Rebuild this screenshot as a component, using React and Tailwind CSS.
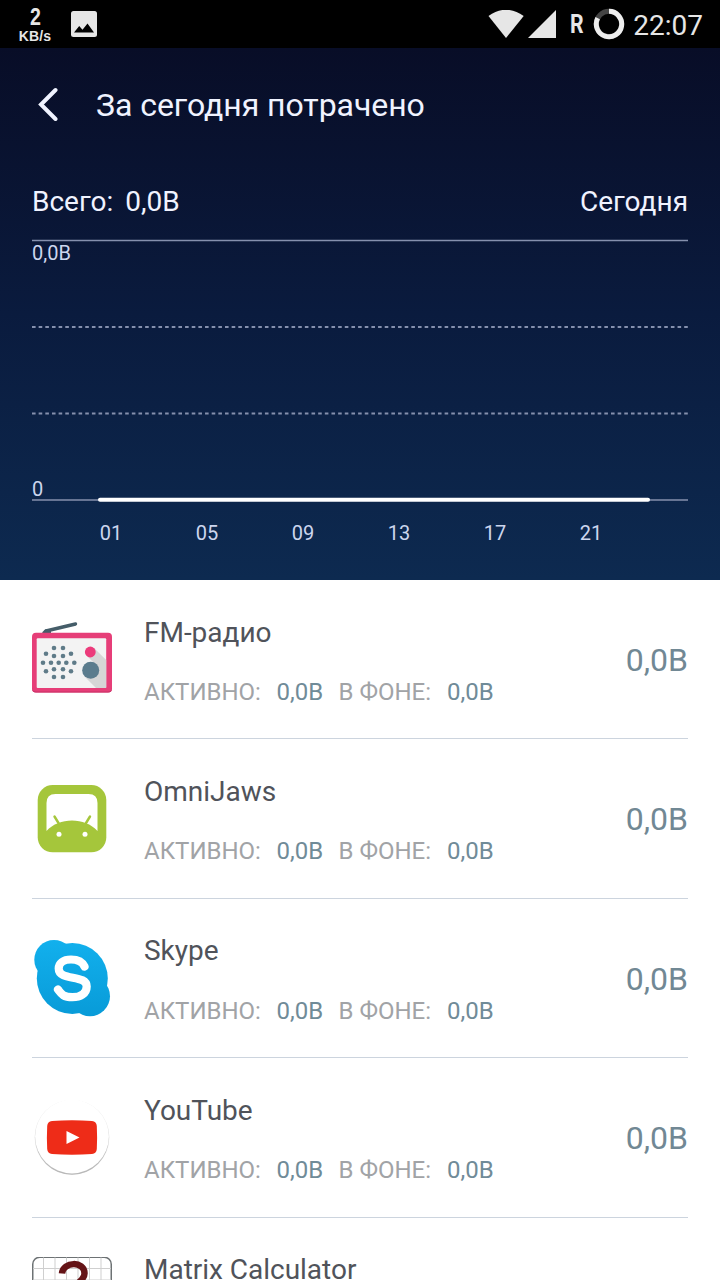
import React from "react";

function StatusBar() {
  return (
    <div className="flex h-12 shrink-0 items-center bg-black text-[#e6e6e6]">
      <div className="ml-[18px] flex h-12 w-[34px] flex-col items-center font-['Liberation_Sans',sans-serif] font-bold">
        <span className="mt-[6px] scale-x-85 text-[23px] leading-[23px]">2</span>
        <span className="text-[14px] leading-[14px] tracking-[0.1px]">KB/s</span>
      </div>
      <svg className="ml-[19px]" width="26" height="26" viewBox="0 0 26 26">
        <rect width="26" height="26" rx="2.5" fill="#e6e6e6" />
        <path d="M3 21.5 8.2 15l3.3 3.8 5-6.2 6.5 8.9z" fill="#000" />
      </svg>
      <div className="ml-auto flex items-center">
        <svg width="36" height="29" viewBox="0 0 36 29">
          <path d="M.5 6Q17.7-6.5 35.700 6L18 28z" fill="#e6e6e6" />
        </svg>
        <svg className="ml-1" width="28" height="28" viewBox="0 0 28 28">
          <path d="M28 0V28H0z" fill="#e6e6e6" />
        </svg>
        <span className="mt-[2px] ml-[14px] w-[14px] text-[25px] leading-7 font-bold"><span className="inline-block origin-left scale-x-85">R</span></span>
        <svg className="ml-[9px]" width="32" height="32" viewBox="0 0 32 32">
          <circle cx="16" cy="16" r="12.7" fill="none" stroke="#444" strokeWidth="5" />
          <path d="M16 3.3A12.7 12.7 0 1 1 4.7 10.2" fill="none" stroke="#eee" strokeWidth="5" />
        </svg>
        <span className="mt-[3px] mr-[17px] ml-[8px] text-[28px] leading-8">22:07</span>
      </div>
    </div>
  );
}

const hours = [
  ["01", 111],
  ["05", 207],
  ["09", 303],
  ["13", 399],
  ["17", 495],
  ["21", 591],
];

function UsageChart() {
  return (
    <svg className="block" width="720" height="344" viewBox="0 236 720 344" fontFamily="Roboto, sans-serif">
      <g stroke="#8590ad" strokeWidth="1.6">
        <path d="M32 240.5H688M32 500H688" />
        <path d="M32 327H688M32 413.5H688" strokeWidth="2" strokeDasharray="3.600 3.055" />
      </g>
      <path d="M100 499.7H648" stroke="#fff" strokeWidth="4" strokeLinecap="round" />
      <g fill="#ccd6ee" fontSize="20">
        <text x="32" y="260">0,0B</text>
        <text x="32" y="496">0</text>
        {hours.map(([label, x]) => (
          <text key={label} x={x} y="540" textAnchor="middle">{label}</text>
        ))}
      </g>
    </svg>
  );
}

function RadioIcon() {
  const dots = [
    [34, 38], [43, 38], [26, 43.7], [34, 46], [43, 46], [51, 43.7],
    [23, 52.7], [31, 52.7], [38.7, 52.7], [46.3, 52.7], [54.3, 52.7],
    [26, 61.3], [34, 59.3], [43, 59.3], [51, 61.3], [34, 67], [43, 67],
  ];
  return (
    <svg width="80" height="80" viewBox="12 9 80 80">
      <path d="M26 21 55.500 14" stroke="#455d69" strokeWidth="3.4" strokeLinecap="round" />
      <path d="M22 23q4-7 9-2v3z" fill="#455d69" />
      <rect x="12" y="22.700" width="80" height="59.800" rx="4" fill="#e63e78" />
      <path d="M12 77.500v1q0 4 4 4h72q4 0 4-4v-1q0 4-4 4H16q-4 0-4-4" fill="#c73066" />
      <rect x="16.7" y="28.300" width="69.500" height="49.700" rx="1" fill="#f3f3f3" />
      <path d="M74 38 86.200 50V78H76L64 66l11-12-8-8z" fill="#d6d6d6" />
      <circle cx="70.3" cy="42" r="5.4" fill="#ec3b7b" />
      <circle cx="70.7" cy="60.3" r="8.5" fill="#5b7c8d" />
      {dots.map(([x, y], i) => <circle key={i} cx={x} cy={y} r="2.3" fill="#5f7b88" />)}
    </svg>
  );
}

function OmniIcon() {
  return (
    <svg width="80" height="80" viewBox="0 -1 80 80">
      <rect x="5.7" y="6" width="68.6" height="67.3" rx="15" fill="#a5c63b" />
      <path d="M14.500 52V24q0-9 9-9h33q9 0 9 9v28C53 38 27 38 14.500 52" fill="#fff" />
      <path d="m22.5 37.5 5.5 9m30-9-5.5 9" stroke="#a5c63b" strokeWidth="2.4" strokeLinecap="round" />
      <circle cx="27" cy="55.3" r="2.5" fill="#fff" />
      <circle cx="53" cy="55.3" r="2.5" fill="#fff" />
    </svg>
  );
}

function SkypeIcon() {
  return (
    <svg width="80" height="80" viewBox="0 0 80 80">
      <defs>
        <linearGradient id="sky" gradientUnits="userSpaceOnUse" x1="0" y1="2" x2="0" y2="78"><stop stopColor="#12b0ed" /><stop offset="1" stopColor="#089bd8" /></linearGradient>
      </defs>
      <g fill="url(#sky)">
        <circle cx="40.300" cy="40.500" r="35.500" />
        <circle cx="22" cy="21.700" r="19.700" />
        <circle cx="58" cy="58.200" r="20" />
      </g>
      <path d="M52.500 28.500C50 23 45 21.500 39 21.500C31 21.500 26.700 25.500 26.700 30.500C26.700 43.500 54.700 36 54.700 48.500C54.700 56 48 59.200 40.500 59.200C31 59.200 29 55.500 26 51.500" fill="none" stroke="#fff" strokeWidth="8.200" strokeLinecap="round" />
    </svg>
  );
}

function YouTubeIcon() {
  return (
    <svg width="80" height="80" viewBox="0 0 80 80">
      <circle cx="40" cy="40.300" r="37.400" fill="#e4e4e4" />
      <circle cx="40" cy="41" r="36.700" fill="#b9b9b9" />
      <circle cx="40" cy="39.500" r="36.900" fill="#fff" />
      <path d="M20 24q20-1.500 40 0 4.500.500 4.800 5 .600 11.500 0 23-.300 4.500-4.800 5-20 1.500-40 0-4.500-.500-4.800-5-.600-11.500 0-23 .300-4.500 4.800-5" fill="#ee2c18" />
      <path d="m34.500 34 13 6.500-13 6.500z" fill="#fff" />
    </svg>
  );
}

function MatrixIcon() {
  return (
    <svg width="80" height="80" viewBox="0 .5 80 80">
      <rect x=".75" y=".75" width="78.500" height="78.500" rx="7" fill="#fff" stroke="#6d7274" strokeWidth="1.500" />
      <path d="M11.500 1v78M23 1v78M34.500 1v78M46 1v78M57.500 1v78M69 1v78M1 12h78M1 23.500h78M1 35h78M1 46.500h78M1 58h78M1 69.500h78" stroke="#cfcfcf" />
      <path d="M30 17C31 5 52.500 4 52.500 17c0 8-11 9-11 21" fill="none" stroke="#641316" strokeWidth="6.500" />
    </svg>
  );
}

const apps = [
  { name: "FM-радио", Icon: RadioIcon },
  { name: "OmniJaws", Icon: OmniIcon },
  { name: "Skype", Icon: SkypeIcon },
  { name: "YouTube", Icon: YouTubeIcon },
  { name: "Matrix Calculator", Icon: MatrixIcon },
];

function AppRow({ name, Icon }) {
  return (
    <li className="mx-8 flex h-[159.4px] border-b border-[#ccd4de]">
      <div className="mt-[39px] h-20 w-20 shrink-0"><Icon /></div>
      <div className="ml-8 flex-1">
        <h2 className="mt-[36.600px] text-[28px] leading-8 tracking-[-0.02px] text-[#50535a]">{name}</h2>
        <p className="mt-[27.200px] flex text-[24px] leading-8 whitespace-nowrap text-[#a1a3a6]">
          <span className="w-[132.5px]">АКТИВНО:</span>
          <span className="w-[62px] text-[#708b98]">0,0B</span>
          <span className="w-[108.500px]">В ФОНЕ:</span>
          <span className="text-[#708b98]">0,0B</span>
        </p>
      </div>
      <span className="mt-[60px] text-[32px] leading-10 text-[#718894]">0,0B</span>
    </li>
  );
}

export default function App() {
  return (
    <div className="flex h-[1280px] w-[720px] flex-col overflow-hidden bg-white font-[Roboto,sans-serif]">
      <StatusBar />
      <section className="h-[532px] shrink-0 bg-linear-to-b from-[#080d27] via-[#0a1b3e] to-[#0d2a50] text-[#f0f3ff]">
        <header className="flex h-[113px] items-center">
          <svg className="-mt-[2px] ml-[38px]" width="22" height="34" viewBox="0 0 22 34">
            <path d="M17.500 3 3 17.500 17.500 32" fill="none" stroke="currentColor" strokeWidth="4" strokeLinecap="round" />
          </svg>
          <h1 className="ml-9 text-[32px] leading-10 tracking-[-0.05px]">За сегодня потрачено</h1>
        </header>
        <div className="mx-8 flex h-[75px] justify-between pt-[25px] text-[28px] leading-8">
          <p>Всего:<span className="ml-3">0,0B</span></p>
          <p>Сегодня</p>
        </div>
        <UsageChart />
      </section>
      <ul>
        {apps.map((app) => <AppRow key={app.name} {...app} />)}
      </ul>
    </div>
  );
}
